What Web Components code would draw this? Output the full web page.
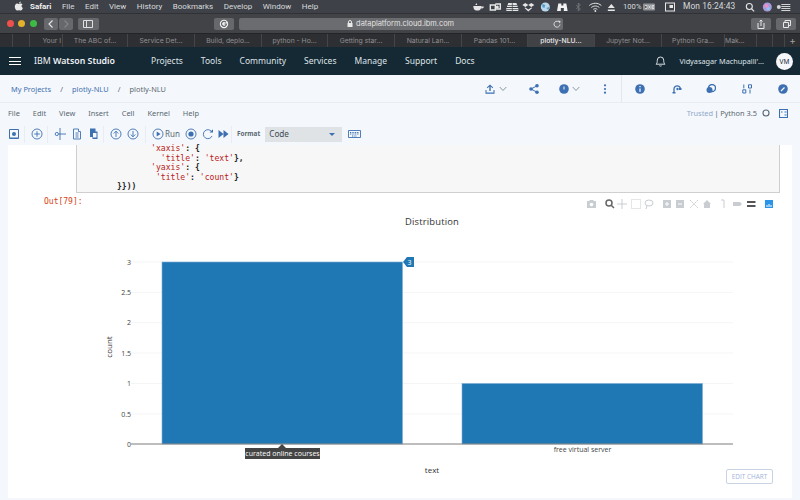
<!DOCTYPE html>
<html>
<head>
<meta charset="utf-8">
<style>
html, body { margin: 0; height: 500px; overflow: hidden; background: #f4f7fb; }
body { display: flex; flex-direction: column; font-family: "Noto Sans", sans-serif; }
</style>
</head>
<body>
<mac-menubar></mac-menubar>
<safari-toolbar></safari-toolbar>
<safari-tabs></safari-tabs>
<ws-header></ws-header>
<ws-breadcrumb></ws-breadcrumb>
<nb-menu></nb-menu>
<nb-toolbar></nb-toolbar>
<nb-page>
  <code-cell></code-cell>
  <plot-output></plot-output>
</nb-page>

<script>
const blue = '#3d70b2'

class MacMenubar extends HTMLElement {
    constructor() {
        super()
        this._shadowDom = this.attachShadow({ mode: 'open' })
    }

    connectedCallback() {
        this._shadowDom.innerHTML = `
        <style>
            :host{ display:flex; height:13px; flex:none; align-items:center; background:#3e4248; color:#d9dadc;
                font:8px/13px Roboto, "Liberation Sans", sans-serif; padding-left:11px; box-sizing:border-box; }
            .apple{ width:19px; flex:none; }
            nav{ display:flex; gap:10.500px; }
            b{ color:#eee; font-weight:700; }
            .status{ margin-left:auto; display:flex; align-items:center; }
            .status svg{ width:16.650px; height:10px; flex:none; }
            .pct{ margin-left:3px; width:20px; font-size:7.600px; }
            .batt{ width:13px!important; margin-right:9px; }
            .flag{ width:10px!important; margin-right:8px; }
            .clock{ width:59px; font-size:8.400px; letter-spacing:.1px; white-space:nowrap; }
            .end{ margin-right:8px; }
        </style>
        <svg class="apple" viewBox="0 0 19 12" height="12"><path fill="#e8e8e8" d="M6 2.600c.9-.1 1.100.5 1.900.4.7 0 1.200-.6 2.100-.4.7.1 1.200.5 1.500 1-1.500.9-1.200 2.900.4 3.500-.4 1-1.200 2.500-2.100 2.500-.7 0-.9-.4-1.700-.4s-1 .4-1.700.4C5 9.600 3.700 7.300 3.800 5.500 3.900 3.900 4.900 2.700 6 2.600zM8 2.500c0-1 .8-1.900 1.800-2 0 1.100-.8 2-1.800 2z"/></svg>
        <nav><b>Safari</b><span>File</span><span>Edit</span><span>View</span><span>History</span><span>Bookmarks</span><span>Develop</span><span>Window</span><span>Help</span></nav>
        <div class="status">
            <svg viewBox="0 0 16 10"><path fill="#e6e6e6" d="M3 4h8c0 3-1.500 4.500-3 4.500H6C4.500 8.500 3 7 3 4zm8 .5h2.500c0 1.500-1 2-2.700 2zM6 1l1 2H5z"/></svg>
            <svg viewBox="0 0 16 10"><path fill="none" stroke="#e6e6e6" stroke-width="1.400" d="M3 3h5v5H3zM8 2h5v5H8"/><circle cx="10" cy="5" r="1.500" fill="#e6e6e6"/></svg>
            <svg viewBox="0 0 16 10"><path fill="#e6e6e6" d="M4 1h8l1.500 4h-11zM2 6h12v3H2z"/><path stroke="#3e4248" stroke-width=".7" d="M8 1v8M2 7.500h12M3 3.500h10"/></svg>
            <svg viewBox="0 0 16 10"><path fill="#e6e6e6" d="M5 1l3 2-3 2-3-2zM11 1l3 2-3 2-3-2zM5 5.500l3 2 3-2 .8.600L8 9.500 4.200 6.100z"/></svg>
            <svg viewBox="0 0 16 10"><circle cx="8" cy="5" r="4.500" fill="#bcd8ec"/><path fill="#4d9cc8" d="M5 2l3 1-1 3-2-1zM9 6l3-1-1 3z"/></svg>
            <svg viewBox="0 0 16 10"><path fill="#f2f2f2" d="M4 1.500h3v2h2v-2h3l1.300 7.500H9.500V6h-3v3H2.700z"/></svg>
            <svg viewBox="0 0 16 10"><path fill="none" stroke="#6f7277" d="M6 3l4 4-2 2V1l2 2-4 4"/></svg>
            <svg viewBox="0 0 16 10"><path fill="none" stroke="#e6e6e6" d="M2 3.500c3.500-3 8.500-3 12 0M4 5.500c2.500-2 5.500-2 8 0M6 7.300c1.200-.8 2.800-.8 4 0"/><circle cx="8" cy="9" r=".9" fill="#e6e6e6"/></svg>
            <svg viewBox="0 0 16 10"><path fill="#e6e6e6" d="M8 2l3.500 4h-7zM4.500 7.500h7V9h-7z"/></svg>
            <span class="pct">100%</span>
            <svg class="batt" viewBox="0 0 13 10"><rect x="0" y="1.500" width="12" height="7" rx="1" fill="#8f9296"/><path stroke="#e8e8e8" stroke-width=".8" d="M2 3.500h2v3H2M2 5h2M5.500 3.500l2 3M7.500 3.500l-2 3M9 3.500h2M9 5h2M9 6.500h2M9 3.500v3"/></svg>
            <svg class="flag" viewBox="0 0 10 10"><rect x=".5" y="1" width="9" height="8" fill="none" stroke="#e6e6e6"/><rect x="4.500" y="3" width="3.500" height="3" fill="#e6e6e6"/></svg>
            <span class="clock">Mon 16:24:43</span>
            <svg viewBox="0 0 16 10"><circle cx="7" cy="4.500" r="3" fill="none" stroke="#e6e6e6" stroke-width="1.100"/><path stroke="#e6e6e6" stroke-width="1.200" d="M9.300 6.800l2.500 2.500"/></svg>
            <svg viewBox="0 0 16 10"><circle cx="8" cy="5" r="4.500" fill="#a99ae0"/><circle cx="7" cy="4" r="2" fill="#e890c4"/><circle cx="9" cy="6.500" r="1.500" fill="#7ed0e8"/></svg>
            <svg class="end" viewBox="0 0 16 10"><path stroke="#d4d4d4" d="M6 2.500h9M6 4.500h9M6 6.500h9M6 8.500h9"/><circle cx="3.500" cy="5" r="2" fill="#d4d4d4"/></svg>
        </div>
        `
    }
}

class SafariToolbar extends HTMLElement {
    constructor() {
        super()
        this._shadowDom = this.attachShadow({ mode: 'open' })
    }

    connectedCallback() {
        this._shadowDom.innerHTML = `
        <style>
            :host{ display:flex; height:20px; flex:none; align-items:center; background:#414347; padding-left:7px; box-sizing:border-box;
                border-top:1px solid #2f3135; }
            .dot{ width:7px; height:7px; border-radius:50%; margin-right:4.300px; flex:none; }
            .btn{ height:12px; background:#66686b; border-radius:2px; display:flex; align-items:center; justify-content:center; flex:none; }
            .addr{ width:324px; height:12px; background:#6b6c6f; border-radius:2px; display:flex; align-items:center; justify-content:center;
                position:relative; color:#e3e3e3; font:7.400px/12px Inter, "Liberation Sans", sans-serif; margin-left:5px; flex:none; }
            .addr svg.lock{ margin-right:3px; }
            .reload{ position:absolute; right:2px; top:2px; }
        </style>
        <span class="dot" style="background:#f0504c"></span>
        <span class="dot" style="background:#e3b02c"></span>
        <span class="dot" style="background:#3dbb45;margin-right:7px"></span>
        <div class="btn" style="width:14px;margin-right:1px"><svg width="8" height="10" viewBox="0 0 8 10"><path fill="none" stroke="#e8e8e8" stroke-width="1.100" d="M5.500 1.500L2 5l3.500 3.500"/></svg></div>
        <div class="btn" style="width:14px;margin-right:5px"><svg width="8" height="10" viewBox="0 0 8 10"><path fill="none" stroke="#85878a" stroke-width="1.100" d="M2.500 1.500L6 5 2.500 8.500"/></svg></div>
        <div class="btn" style="width:21px;margin-right:115px"><svg width="10" height="8" viewBox="0 0 10 8"><path fill="none" stroke="#e0e0e0" d="M.5.500h9v7h-9zM3.500.500v7"/></svg></div>
        <div class="btn" style="width:20px"><svg width="10" height="10" viewBox="0 0 10 10"><circle cx="5" cy="5" r="4.200" fill="#f2f2f2"/><path fill="none" stroke="#66686b" stroke-width="1.200" d="M7 3.300A2.500 2.500 0 1 0 7.500 5H5.500"/></svg></div>
        <div class="addr">
            <svg class="lock" width="6" height="7" viewBox="0 0 6 7"><path fill="#e8e8e8" d="M.5 3h5v4h-5z"/><path fill="none" stroke="#e8e8e8" d="M1.500 3V2a1.500 1.500 0 0 1 3 0v1"/></svg>dataplatform.cloud.ibm.com
            <svg class="reload" width="8" height="8" viewBox="0 0 8 8"><path fill="none" stroke="#dcdcdc" d="M6.500 2.500A3 3 0 1 0 7 4.500"/><path fill="#dcdcdc" d="M5 .5l2.500.5-.5 2.500z"/></svg>
        </div>
        <div class="btn" style="width:20px;margin-left:188px"><svg width="8" height="10" viewBox="0 0 8 10"><path fill="none" stroke="#e8e8e8" d="M1 4v5.500h6V4M4 7V1M2.500 2.500L4 1l1.500 1.500"/></svg></div>
        <div class="btn" style="width:20px;margin-left:5px"><svg width="10" height="8" viewBox="0 0 10 8"><path fill="none" stroke="#e8e8e8" d="M2.500 2.500h5v5h-5zM4 2.500v-2h5.500v5h-2"/></svg></div>
        `
    }
}

class SafariTabs extends HTMLElement {
    constructor() {
        super()
        this._shadowDom = this.attachShadow({ mode: 'open' })
    }

    connectedCallback() {
        const tabs = [[13, ''], [17, ''], [33, 'Your I', 'r'], [65, 'The ABC of...'], [67, 'Service Det...'], [67, 'Build, deplo...'], [66, 'python - Ho...'], [67, 'Getting star...'], [67, 'Natural Lan...'], [66, 'Pandas 101...'], [67, 'plotly-NLU...', 'on'], [67, 'Jupyter Not...'], [63, 'Python Gra...'], [32, 'Mak...', 'l'], [16, ''], [12, '']]
        this._shadowDom.innerHTML = `
        <style>
            :host{ display:flex; height:14px; flex:none; background:#2e2f32; color:#8f9092; font:6.800px/13px Inter, "Liberation Sans", sans-serif;
                border-top:1px solid #232427; box-sizing:border-box; }
            span{ border-right:1px solid #45464a; box-sizing:border-box; text-align:center; white-space:nowrap; overflow:hidden; flex:none; }
            .r{ text-align:right; padding-right:1px; }
            .l{ text-align:left; }
            .on{ background:#414246; color:#dedede; font-weight:600; }
            i{ font-style:normal; width:15px; text-align:center; color:#a0a0a0; font-size:10px; line-height:12px; }
        </style>
        ${tabs.map(t => `<span class="${t[2] || ''}" style="width:${t[0]}px">${t[1]}</span>`).join('')}
        <i>+</i>
        `
    }
}

class WsHeader extends HTMLElement {
    constructor() {
        super()
        this._shadowDom = this.attachShadow({ mode: 'open' })
    }

    connectedCallback() {
        this._shadowDom.innerHTML = `
        <style>
            :host{ display:flex; height:28px; flex:none; align-items:center; background:#152935; color:#dfe3e6;
                font:8.500px/28px "Noto Sans", sans-serif; padding-left:9px; box-sizing:border-box; }
            .menu{ width:12px; height:8px; border-top:1px solid #fff; border-bottom:1px solid #fff; position:relative; margin-right:13px; box-sizing:border-box; }
            .menu::after{ content:''; position:absolute; left:0; right:0; top:2.500px; height:1px; background:#fff; }
            .brand{ width:117px; font-size:8.800px; color:#f0f3f5; white-space:nowrap; }
            .brand b{ font-weight:600; }
            nav{ display:flex; gap:18px; }
            .right{ margin-left:auto; display:flex; align-items:center; padding-right:7px; }
            .user{ font-size:7.300px; margin:0 12px 0 13px; white-space:nowrap; }
            .avatar{ width:17px; height:17px; border-radius:50%; background:#f5f7fa; color:#152935; font-size:6.500px; line-height:17px; text-align:center; }
        </style>
        <div class="menu"></div>
        <div class="brand">IBM <b>Watson Studio</b></div>
        <nav><span>Projects</span><span>Tools</span><span>Community</span><span>Services</span><span>Manage</span><span>Support</span><span>Docs</span></nav>
        <div class="right">
            <svg width="11" height="12" viewBox="0 0 11 12"><path fill="none" stroke="#eef1f3" stroke-width=".9" d="M1 9.200c1-1 1.300-1.700 1.300-4a3.200 3.200 0 0 1 6.400 0c0 2.300.3 3 1.300 4zM4.300 10.500c.4.800 2 .8 2.400 0"/></svg>
            <span class="user">Vidyasagar Machupalli'...</span>
            <div class="avatar">VM</div>
        </div>
        `
    }
}

class WsBreadcrumb extends HTMLElement {
    constructor() {
        super()
        this._shadowDom = this.attachShadow({ mode: 'open' })
    }

    connectedCallback() {
        const g = `fill="${blue}"`
        this._shadowDom.innerHTML = `
        <style>
            :host{ display:flex; height:28px; flex:none; align-items:center; background:#f4f7fb; box-sizing:border-box;
                border-bottom:1px solid #e9edf2; font:7.400px/28px "Noto Sans", sans-serif; color:#5a6872; padding-left:11px; }
            a{ color:#3d70b2; }
            i{ font-style:normal; width:21px; text-align:center; color:#5a6872; }
            .icons{ margin-left:auto; display:flex; align-items:center; height:100%; }
            .icons svg{ flex:none; }
            .tools{ display:flex; align-items:center; height:100%; border-left:1px solid #e4e8ed; margin-left:14px; padding-right:12px; }
        </style>
        <a>My Projects</a><i>/</i><a>plotly-NLU</a><i>/</i><span>plotly-NLU</span>
        <div class="icons">
            <svg width="10" height="10" viewBox="0 0 10 10"><path ${g} d="M4.300 7V2.500L2.500 4.300 1.800 3.600 5 .5l3.200 3.100-.7.700-1.800-1.800V7zM.5 8.500h9v1.200h-9zM.5 6h1v3h-1zM8.500 6h1v3h-1z"/></svg>
            <svg style="margin:0 22px 0 4px" width="8" height="6" viewBox="0 0 8 6"><path fill="none" stroke="#8897a2" d="M.7 1L4 4.500 7.300 1"/></svg>
            <svg style="margin-right:20px" width="10" height="10" viewBox="0 0 10 10"><g ${g}><circle cx="2" cy="5" r="1.800"/><circle cx="8" cy="1.800" r="1.800"/><circle cx="8" cy="8.200" r="1.800"/></g><path stroke="${blue}" d="M2 5l6-3.200M2 5l6 3.200"/></svg>
            <svg width="10" height="10" viewBox="0 0 10 10"><circle cx="5" cy="5" r="4.800" ${g}/><path stroke="#f4f7fb" d="M5 2.500v3"/></svg>
            <svg style="margin:0 23px 0 3px" width="8" height="6" viewBox="0 0 8 6"><path fill="none" stroke="#8897a2" d="M.7 1L4 4.500 7.300 1"/></svg>
            <svg width="4" height="10" viewBox="0 0 4 10"><g ${g}><circle cx="2" cy="1.300" r="1.100"/><circle cx="2" cy="5" r="1.100"/><circle cx="2" cy="8.700" r="1.100"/></g></svg>
            <div class="tools">
                <svg style="margin:0 27px 0 13px" width="10" height="10" viewBox="0 0 10 10"><circle cx="5" cy="5" r="4.800" ${g}/><path stroke="#f4f7fb" stroke-width="1.300" d="M5 4.500v3.200M5 2v1.300"/></svg>
                <svg style="margin-right:24px" width="10" height="10" viewBox="0 0 10 10"><path fill="none" stroke="${blue}" stroke-width="1.300" d="M2 8.500V5a3.200 3.200 0 0 1 6.400 0"/><circle cx="5.500" cy="5" r="1.200" ${g}/><path ${g} d="M.5 8h3v1.500h-3zM7 4h2.500v2H7z"/></svg>
                <svg style="margin-right:26px" width="10" height="10" viewBox="0 0 10 10"><circle cx="6" cy="4" r="3.500" fill="none" stroke="${blue}" stroke-width="1.300"/><circle cx="3.500" cy="6" r="3" ${g}/></svg>
                <svg style="margin-right:26px" width="10" height="10" viewBox="0 0 10 10"><path fill="none" stroke="${blue}" d="M1.800.5v3.800M6.500.8h3v3.200h-3zM.8 5.800h3V9h-3zM8 5.500v4"/></svg>
                <svg width="10" height="10" viewBox="0 0 10 10"><circle cx="5" cy="5" r="4.800" ${g}/><path stroke="#f4f7fb" stroke-width="1.200" d="M3 7l3.500-3.500"/></svg>
            </div>
        </div>
        `
    }
}

class NbMenu extends HTMLElement {
    constructor() {
        super()
        this._shadowDom = this.attachShadow({ mode: 'open' })
    }

    connectedCallback() {
        this._shadowDom.innerHTML = `
        <style>
            :host{ display:flex; height:20px; flex:none; align-items:center; font:7.400px/20px "Noto Sans", sans-serif; color:#5a6872; padding:0 12px 0 8px; }
            nav{ display:flex; gap:13px; }
            .kernel{ margin-left:auto; display:flex; align-items:center; }
            .tr{ color:#8fa8cc; }
            .bar{ margin:0 1.500px; color:#5a6872; }
            svg{ flex:none; }
        </style>
        <nav><span>File</span><span>Edit</span><span>View</span><span>Insert</span><span>Cell</span><span>Kernel</span><span>Help</span></nav>
        <div class="kernel">
            <span class="tr">Trusted</span><span class="bar">|</span><span>Python 3.5</span>
            <svg style="margin:0 9px 0 5px" width="8" height="8" viewBox="0 0 8 8"><circle cx="4" cy="4" r="3" fill="none" stroke="#5a6872" stroke-width="1.100"/></svg>
            <svg width="9" height="9" viewBox="0 0 9 9"><path fill="none" stroke="${blue}" stroke-width="1.100" d="M.5.500h8v8h-8z"/><path stroke="${blue}" d="M5.500 3h2M5.500 6h2M2 3h1.500"/></svg>
        </div>
        `
    }
}

class NbToolbar extends HTMLElement {
    constructor() {
        super()
        this._shadowDom = this.attachShadow({ mode: 'open' })
    }

    connectedCallback() {
        const c = `fill="none" stroke="${blue}" stroke-width=".9"`
        const circled = d => `<svg viewBox="0 0 12 12"><circle cx="6" cy="6" r="5" ${c}/><path ${c} d="${d}"/></svg>`
        this._shadowDom.innerHTML = `
        <style>
            :host{ display:flex; height:22px; flex:none; align-items:center; font:8px/22px "Noto Sans", sans-serif; color:#5a6872; padding-left:5px; box-sizing:border-box; }
            .g{ display:flex; align-items:center; height:17px; border-right:1px solid #e9edf2; box-sizing:content-box; }
            .g svg{ width:12px; height:12px; flex:none; margin:0 2.500px; }
            .run{ color:#5a6872; font-size:8px; margin:0 3px 0 -1px; }
            .fmt{ font-size:6.400px; font-weight:700; margin:0 5px; color:#5a6872; }
            .select{ width:77px; height:15px; background:#dfe3e6; box-sizing:border-box; padding:0 7px 0 4px; display:flex; align-items:center; justify-content:space-between;
                font-size:8.200px; color:#3d4a54; }
            .select i{ border:3px solid transparent; border-top:3.500px solid #3d70b2; border-bottom:0; }
        </style>
        <div class="g" style="width:19px"><svg viewBox="0 0 12 12"><path fill="none" stroke="${blue}" d="M1.500 1.500h9v9h-9z"/><circle cx="6" cy="6" r="2" fill="${blue}"/><path stroke="${blue}" d="M2 10h8"/></svg></div>
        <div class="g" style="padding-left:3px;width:19px">${circled('M6 3.200v5.600M3.200 6h5.600')}</div>
        <div class="g" style="padding-left:3px;width:52px">
            <svg viewBox="0 0 12 12"><path ${c} d="M6 0v12M4.500 6H12"/><circle cx="2.800" cy="6" r="1.600" ${c}/></svg>
            <svg viewBox="0 0 12 12"><path ${c} d="M2.500 1h5v2.500h2V11h-7zM4.500 5h3M4.500 7h3M4.500 9h3"/></svg>
            <svg viewBox="0 0 12 12"><path fill="${blue}" d="M2 .5h5.500v3h2V11h-5V9H2z"/><path fill="#f4f7fb" d="M5 5h3.500v4.500H5z"/></svg>
        </div>
        <div class="g" style="padding-left:3px;width:38px">${circled('M6 9V3.200M3.700 5.500L6 3.200l2.300 2.300')}${circled('M6 3v5.800M3.700 6.500L6 8.800l2.300-2.300')}</div>
        <div class="g" style="padding-left:3px;width:82px">
            ${circled('').replace('<path', '<path fill="' + blue + '" stroke="none" d="M4.700 3.500L8.500 6l-3.800 2.500z"/><path')}
            <span class="run">Run</span>
            <svg viewBox="0 0 12 12"><circle cx="6" cy="6" r="5" ${c}/><circle cx="6" cy="6" r="2.600" fill="${blue}"/></svg>
            <svg viewBox="0 0 12 12"><path ${c} d="M9.500 3.500A4.500 4.500 0 1 0 10 8"/><path fill="${blue}" d="M7.500 4h3.500V.8z" transform="translate(0 .4)"/></svg>
            <svg viewBox="0 0 12 12" style="margin-left:0"><path fill="${blue}" d="M1.500 2L6.500 6l-5 4zM6.500 2l5 4-5 4z"/></svg>
        </div>
        <div class="g" style="padding-left:0;border-right:0">
            <span class="fmt">Format</span>
            <div class="select">Code<i></i></div>
            <svg style="margin:0 5px 0 6px;width:13px" viewBox="0 0 13 12"><path fill="none" stroke="${blue}" stroke-width=".9" d="M.5 2.500h12v7H.5z"/><path stroke="${blue}" d="M2 4.500h9M2 6h9M4 8h5" stroke-dasharray="1 .7"/></svg>
        </div>
        `
    }
}

class NbPage extends HTMLElement {
    constructor() {
        super()
        this._shadowDom = this.attachShadow({ mode: 'open' })
    }

    connectedCallback() {
        this._shadowDom.innerHTML = `
        <style>
            :host{ display:block; height:353px; margin:0 8px; background:#fff; flex:none; }
        </style>
        <slot></slot>
        `
    }
}

class CodeCell extends HTMLElement {
    constructor() {
        super()
        this._shadowDom = this.attachShadow({ mode: 'open' })
    }

    connectedCallback() {
        const line = (indent, html) => `<div class="l" style="padding-left:${indent}ch">${html}</div>`
        this._shadowDom.innerHTML = `
        <style>
            :host{ display:flow-root; height:48px; margin:0 12px 0 68px; background:#f7f7f7; border:1px solid #cfcfcf; border-top:0; box-sizing:border-box; }
            .code{ margin:-1px 0 0 40px; font:700 8.100px/9.500px "DejaVu Sans Mono", monospace; color:#222; }
            .l{ height:9.500px; white-space:pre; }
            s{ text-decoration:none; color:#ba2121; font-weight:400; }
        </style>
        <div class="code">
            ${line(7, `<s>'xaxis'</s><span>: {</span>`)}
            ${line(9, `<s>'title'</s><span>: </span><s>'text'</s><span>},</span>`)}
            ${line(7, `<s>'yaxis'</s><span>: {</span>`)}
            ${line(8, `<s>'title'</s><span>: </span><s>'count'</s><span>}</span>`)}
            ${line(0, `<span>}}))</span>`)}
        </div>
        `
    }
}

class PlotOutput extends HTMLElement {
    constructor() {
        super()
        this._shadowDom = this.attachShadow({ mode: 'open' })
    }

    connectedCallback() {
        // svg coords are the page's own, shifted by the viewBox
        const gridY = [262, 292.4, 322.7, 353, 383.5, 414]
        const ticks = [['3', 262], ['2.5', 292.4], ['2', 322.7], ['1.5', 353], ['1', 383.5], ['0.5', 414], ['0', 444]]
        const m = '#c9cdd1'
        this._shadowDom.innerHTML = `
        <style>
            :host{ display:block; position:relative; height:305px; }
            .out{ position:absolute; left:36px; top:4px; font:8px/10px "DejaVu Sans Mono", monospace; color:#d84315; }
            svg.plot{ display:block; }
            text{ font-family:"Open Sans", sans-serif; fill:#444; }
            button{ position:absolute; left:718px; top:276px; width:47px; height:15px; padding:0; background:#fff; border:1px solid #c8d4e3; border-radius:2px;
                font:6.400px/13px "Open Sans", sans-serif; color:#a3b3d9; }
        </style>
        <div class="out">Out[79]:</div>
        <svg class="plot" width="784" height="305" viewBox="8 193 784 305">
            <g stroke="#f5f5f6">${gridY.map(y => `<path d="M131 ${y}H733"/>`).join('')}</g>
            <rect x="162" y="262" width="240.500" height="182" fill="#1f77b4" stroke="#7fb0d6" stroke-width=".6"/>
            <rect x="462" y="383.500" width="240.500" height="60.500" fill="#1f77b4" stroke="#7fb0d6" stroke-width=".6"/>
            <path d="M131 444H733" stroke="#7d7d7d"/>
            <text x="432" y="225" text-anchor="middle" font-size="9.400" letter-spacing=".2" style="fill:#333">Distribution</text>
            <g font-size="7" text-anchor="end">${ticks.map(t => `<text x="131" y="${t[1] + 2.500}">${t[0]}</text>`).join('')}</g>
            <text x="582.500" y="452" text-anchor="middle" font-size="7">free virtual server</text>
            <text x="432" y="473" text-anchor="middle" font-size="8" style="fill:#333">text</text>
            <text transform="translate(111.500 347) rotate(-90)" text-anchor="middle" font-size="8" style="fill:#333">count</text>
            <path d="M403 262l4-5h7v10h-7z" fill="#1f77b4"/>
            <text x="409.500" y="264.500" text-anchor="middle" font-size="7" style="fill:#fff">3</text>
            <path d="M282 444l4 4h-8z" fill="#444"/>
            <rect x="245" y="448" width="75" height="11" fill="#444"/>
            <text x="282.500" y="456" text-anchor="middle" font-size="7" style="fill:#fff">curated online courses</text>
            <g fill="${m}">
                <path d="M587 201h2l1-1h3l1 1h2v7h-9z"/><circle cx="591.500" cy="204.500" r="1.800" fill="#fff"/>
                <circle cx="609" cy="203" r="3" fill="none" stroke="#666" stroke-width="1.500"/><path d="M611 205l3 3" stroke="#666" stroke-width="1.500"/>
                <path d="M622 199v10M617 204h10" stroke="${m}" fill="none"/>
                <path d="M631.500 199.500h9v9h-9z" fill="none" stroke="${m}" stroke-dasharray="1 1"/>
                <ellipse cx="649" cy="203" rx="4" ry="3" fill="none" stroke="${m}"/><path d="M647 206l-1 3" stroke="${m}"/>
                <path d="M663 200h8v8h-8z"/><path d="M665 204h4M667 202v4" stroke="#fff"/>
                <path d="M676 200h8v8h-8z"/><path d="M678 204h4" stroke="#fff"/>
                <path d="M690 200l8 8M698 200l-8 8" stroke="${m}" fill="none" stroke-dasharray="2 1"/>
                <path d="M707 200l4 4h-1v4h-6v-4h-1z"/>
                <path d="M724 200v8M721 200h3" stroke="${m}" fill="none"/>
                <path d="M733 202h7l2 2-2 2h-7z"/>
                <path d="M747 201h8l1 1-1 1h-8zM747 205h8l1 1-1 1h-8z" fill="#555"/>
            </g>
            <rect x="765" y="200" width="8" height="8" fill="#2a94e8"/>
            <path d="M767 207v-2M769 207v-3M771 207v-2" stroke="#fff"/>
        </svg>
        <button>EDIT CHART</button>
        `
    }
}

window.customElements.define('mac-menubar', MacMenubar)
window.customElements.define('safari-toolbar', SafariToolbar)
window.customElements.define('safari-tabs', SafariTabs)
window.customElements.define('ws-header', WsHeader)
window.customElements.define('ws-breadcrumb', WsBreadcrumb)
window.customElements.define('nb-menu', NbMenu)
window.customElements.define('nb-toolbar', NbToolbar)
window.customElements.define('nb-page', NbPage)
window.customElements.define('code-cell', CodeCell)
window.customElements.define('plot-output', PlotOutput)
</script>
</body>
</html>
